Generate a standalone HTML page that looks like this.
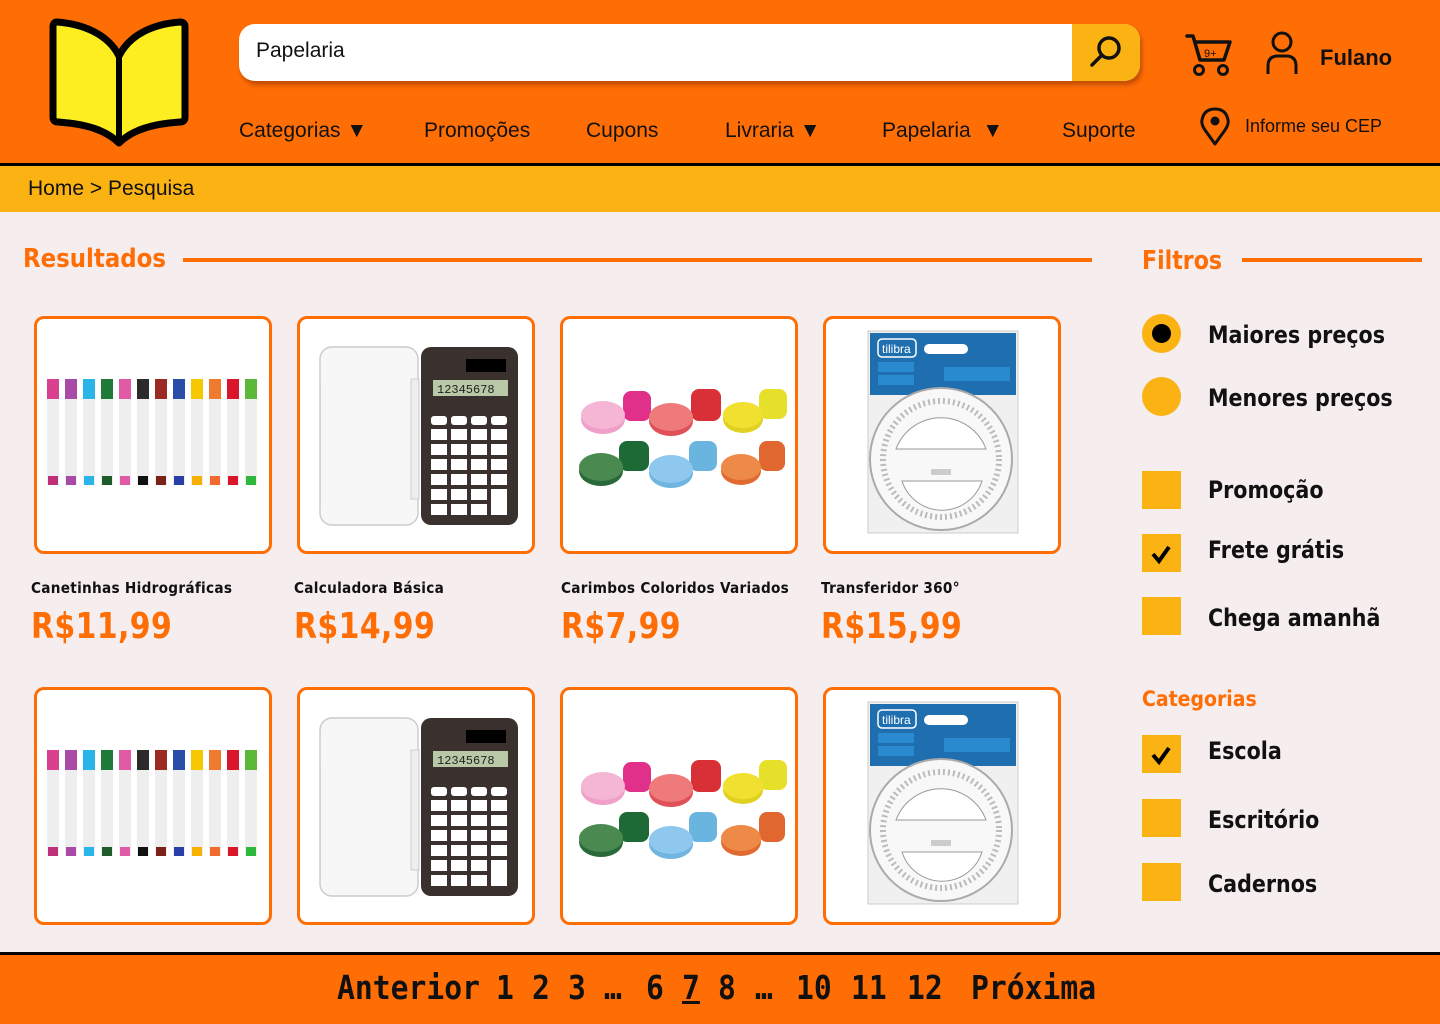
<!DOCTYPE html>
<html><head><meta charset="utf-8">
<style>
*{margin:0;padding:0;box-sizing:border-box}
body{width:1440px;height:1024px;position:relative;background:#F5EDEE;font-family:"DejaVu Sans",sans-serif;overflow:hidden}
.a{position:absolute}
.hdr{left:0;top:0;width:1440px;height:163px;background:#FF6D05}
.bl{left:0;width:1440px;height:3px;background:#000}
.crumb{left:0;top:166px;width:1440px;height:46px;background:#FBB313}
.geo{font-family:"Liberation Sans",sans-serif;color:#111}
.nav{top:117px;font-size:21px;line-height:28px}
.card{width:238px;height:238px;border:3px solid #FF6D05;border-radius:10px;background:#fff;overflow:hidden}
.card svg{position:absolute;left:0;top:0}
.sx{transform-origin:left center;white-space:nowrap}
.name{font-size:15px;font-weight:bold;color:#111;top:579px;letter-spacing:.3px;transform:scaleX(.91)}
.price{font-size:36px;font-weight:bold;color:#FF6D05;top:606px;letter-spacing:.5px;transform:scaleX(.83)}
.ttl{font-size:26px;font-weight:bold;color:#FF6D05}
.circ{width:39px;height:39px;border-radius:50%;background:#FBB313;left:1142px}
.box{width:39px;height:38px;background:#FBB313;left:1142px}
.lbl{left:1208px;font-size:24px;font-weight:bold;color:#111;line-height:30px;transform:scaleX(.86)}
.pg{top:968px;font-family:"DejaVu Sans Mono",monospace;font-weight:bold;font-size:33px;color:#111;line-height:40px;transform:scaleX(.9);transform-origin:left}
</style></head><body>
<div class="a hdr"></div>
<div class="a bl" style="top:163px"></div>
<div class="a crumb"></div>
<div class="a geo" style="left:28px;top:175px;font-size:21px;line-height:28px">Home &gt; Pesquisa</div>

<svg class="a" style="left:48px;top:18px" width="142" height="130" viewBox="0 0 142 130">
<path d="M71 38 C60 16 35 6 9 4 Q5 4 5 9 L5 99 Q5 104 10 104 C38 106 58 112 71 125 C84 112 104 106 132 104 Q137 104 137 99 L137 9 Q137 4 132 4 C106 6 82 16 71 38 Z" fill="#FCEE21" stroke="#000" stroke-width="7" stroke-linejoin="round"/>
<path d="M71 38 L71 123" stroke="#000" stroke-width="6"/>
</svg>

<div class="a" style="left:239px;top:24px;width:901px;height:57px;background:#fff;border-radius:16px;box-shadow:2px 4px 4px rgba(120,40,0,.45);overflow:hidden">
<div class="a" style="right:0;top:0;width:68px;height:57px;background:#FBB313"></div>
<svg class="a" style="right:16px;top:10px" width="36" height="36" viewBox="0 0 36 36"><circle cx="21" cy="14" r="10" fill="none" stroke="#111" stroke-width="3.5"/><path d="M14 21 L4 31" stroke="#111" stroke-width="3.5" stroke-linecap="round"/></svg>
</div>
<div class="a geo" style="left:256px;top:37px;font-size:21px;line-height:28px">Papelaria</div>

<svg class="a" style="left:1184px;top:30px" width="54" height="48" viewBox="0 0 54 48">
<path d="M3 6 L9 6 L16 30 L40 30 L46 12 L11 12" fill="none" stroke="#111" stroke-width="3.5" stroke-linejoin="round" stroke-linecap="round"/>
<circle cx="15" cy="40" r="4.5" fill="none" stroke="#111" stroke-width="3"/><circle cx="39" cy="40" r="4.5" fill="none" stroke="#111" stroke-width="3"/>
<text x="20" y="27" font-family="Liberation Sans" font-size="11" fill="#111">9+</text>
</svg>
<svg class="a" style="left:1264px;top:30px" width="38" height="46" viewBox="0 0 38 46">
<circle cx="18" cy="12" r="9" fill="none" stroke="#111" stroke-width="3"/>
<path d="M4 44 L4 36 Q4 26 14 26 L22 26 Q32 26 32 36 L32 44" fill="none" stroke="#111" stroke-width="3"/>
</svg>
<div class="a" style="left:1320px;top:45px;font-family:'Liberation Sans',sans-serif;font-weight:bold;font-size:22px;color:#111">Fulano</div>

<div class="a geo nav" style="left:239px">Categorias ▼</div>
<div class="a geo nav" style="left:424px">Promoções</div>
<div class="a geo nav" style="left:586px">Cupons</div>
<div class="a geo nav" style="left:725px">Livraria ▼</div>
<div class="a geo nav" style="left:882px">Papelaria &nbsp;▼</div>
<div class="a geo nav" style="left:1062px">Suporte</div>
<svg class="a" style="left:1199px;top:106px" width="32" height="42" viewBox="0 0 32 42">
<path d="M16 38 L6 24 Q2 18 3 14 Q5 3 16 3 Q27 3 29 14 Q30 18 26 24 Z" fill="none" stroke="#111" stroke-width="3" stroke-linejoin="round"/>
<circle cx="16" cy="15" r="4.5" fill="#111"/></svg>
<div class="a geo" style="left:1245px;top:114px;font-size:18px;line-height:24px">Informe seu CEP</div>

<div class="a ttl sx" style="left:23px;top:244px;transform:scaleX(.88)">Resultados</div>
<div class="a" style="left:183px;top:258px;width:909px;height:4px;background:#FF6D05"></div>
<div class="a ttl sx" style="left:1142px;top:246px;transform:scaleX(.85)">Filtros</div>
<div class="a" style="left:1242px;top:258px;width:180px;height:4px;background:#FF6D05"></div>

<div class="a circ" style="top:314px"><div class="a" style="left:10px;top:10px;width:19px;height:19px;border-radius:50%;background:#000"></div></div>
<div class="a lbl sx" style="top:320px">Maiores preços</div>
<div class="a circ" style="top:377px"></div>
<div class="a lbl sx" style="top:383px">Menores preços</div>
<div class="a box" style="top:471px"></div>
<div class="a lbl sx" style="top:475px">Promoção</div>
<div class="a box" style="top:534px"><svg width="39" height="38"><path d="M11 20 L17 27 L27 13" fill="none" stroke="#000" stroke-width="4"/></svg></div>
<div class="a lbl sx" style="top:535px">Frete grátis</div>
<div class="a box" style="top:597px"></div>
<div class="a lbl sx" style="top:603px">Chega amanhã</div>
<div class="a sx" style="left:1142px;top:687px;font-size:21px;font-weight:bold;color:#FF6D05;transform:scaleX(.9)">Categorias</div>
<div class="a box" style="top:735px"><svg width="39" height="38"><path d="M11 20 L17 27 L27 13" fill="none" stroke="#000" stroke-width="4"/></svg></div>
<div class="a lbl sx" style="top:736px">Escola</div>
<div class="a box" style="top:799px"></div>
<div class="a lbl sx" style="top:805px">Escritório</div>
<div class="a box" style="top:863px"></div>
<div class="a lbl sx" style="top:869px">Cadernos</div>

<div class="a card" style="left:34px;top:316px"><svg width="232" height="232">
<g>
<rect x="10" y="60" width="12" height="106" fill="#eee"/><rect x="10" y="60" width="12" height="20" fill="#d9408f"/><rect x="11" y="157" width="10" height="9" fill="#c02f7a"/>
<rect x="28" y="60" width="12" height="106" fill="#eee"/><rect x="28" y="60" width="12" height="20" fill="#a94aa8"/><rect x="29" y="157" width="10" height="9" fill="#a94aa8"/>
<rect x="46" y="60" width="12" height="106" fill="#eee"/><rect x="46" y="60" width="12" height="20" fill="#29b5e8"/><rect x="47" y="157" width="10" height="9" fill="#29b5e8"/>
<rect x="64" y="60" width="12" height="106" fill="#eee"/><rect x="64" y="60" width="12" height="20" fill="#1f7a3a"/><rect x="65" y="157" width="10" height="9" fill="#1f5a2a"/>
<rect x="82" y="60" width="12" height="106" fill="#eee"/><rect x="82" y="60" width="12" height="20" fill="#e05aa5"/><rect x="83" y="157" width="10" height="9" fill="#e05aa5"/>
<rect x="100" y="60" width="12" height="106" fill="#eee"/><rect x="100" y="60" width="12" height="20" fill="#2b2b2b"/><rect x="101" y="157" width="10" height="9" fill="#111"/>
<rect x="118" y="60" width="12" height="106" fill="#eee"/><rect x="118" y="60" width="12" height="20" fill="#9b2a22"/><rect x="119" y="157" width="10" height="9" fill="#7a2218"/>
<rect x="136" y="60" width="12" height="106" fill="#eee"/><rect x="136" y="60" width="12" height="20" fill="#2a4ea8"/><rect x="137" y="157" width="10" height="9" fill="#2a3ea8"/>
<rect x="154" y="60" width="12" height="106" fill="#eee"/><rect x="154" y="60" width="12" height="20" fill="#f5c800"/><rect x="155" y="157" width="10" height="9" fill="#f5b000"/>
<rect x="172" y="60" width="12" height="106" fill="#eee"/><rect x="172" y="60" width="12" height="20" fill="#f07a30"/><rect x="173" y="157" width="10" height="9" fill="#f06a30"/>
<rect x="190" y="60" width="12" height="106" fill="#eee"/><rect x="190" y="60" width="12" height="20" fill="#d8182a"/><rect x="191" y="157" width="10" height="9" fill="#d8182a"/>
<rect x="208" y="60" width="12" height="106" fill="#eee"/><rect x="208" y="60" width="12" height="20" fill="#5cb83a"/><rect x="209" y="157" width="10" height="9" fill="#2cb83a"/>
</g></svg></div>

<div class="a card" style="left:297px;top:316px"><svg width="232" height="232">
<rect x="20" y="28" width="98" height="178" rx="12" fill="#f7f7f7" stroke="#ccc" stroke-width="1.5"/>
<rect x="111" y="60" width="8" height="120" fill="#eee" stroke="#ccc"/>
<rect x="121" y="28" width="97" height="178" rx="10" fill="#3a302e"/>
<rect x="166" y="40" width="40" height="13" fill="#000"/>
<rect x="133" y="61" width="75" height="16" fill="#b9c9a8"/>
<text x="137" y="74" font-family="Liberation Mono" font-size="12" fill="#222">12345678</text>
<g fill="#fff">
<rect x="131" y="97" width="16" height="9" rx="3"/><rect x="151" y="97" width="16" height="9" rx="3"/><rect x="171" y="97" width="16" height="9" rx="3"/><rect x="191" y="97" width="16" height="9" rx="3"/>
<rect x="131" y="110" width="16" height="11"/><rect x="151" y="110" width="16" height="11"/><rect x="171" y="110" width="16" height="11"/><rect x="191" y="110" width="16" height="11"/>
<rect x="131" y="125" width="16" height="11"/><rect x="151" y="125" width="16" height="11"/><rect x="171" y="125" width="16" height="11"/><rect x="191" y="125" width="16" height="11"/>
<rect x="131" y="140" width="16" height="11"/><rect x="151" y="140" width="16" height="11"/><rect x="171" y="140" width="16" height="11"/><rect x="191" y="140" width="16" height="11"/>
<rect x="131" y="155" width="16" height="11"/><rect x="151" y="155" width="16" height="11"/><rect x="171" y="155" width="16" height="11"/><rect x="191" y="155" width="16" height="11"/>
<rect x="131" y="170" width="16" height="11"/><rect x="151" y="170" width="16" height="11"/><rect x="171" y="170" width="16" height="11"/><rect x="191" y="170" width="16" height="26"/>
<rect x="131" y="185" width="16" height="11"/><rect x="151" y="185" width="16" height="11"/><rect x="171" y="185" width="16" height="11"/>
</g></svg></div>

<div class="a card" style="left:560px;top:316px"><svg width="232" height="232">
<g><rect x="60" y="72" width="28" height="30" rx="8" fill="#e0308a"/><ellipse cx="40" cy="100" rx="22" ry="15" fill="#f0a0c8"/><ellipse cx="40" cy="96" rx="22" ry="14" fill="#f4b6d4"/></g>
<g><rect x="128" y="70" width="30" height="32" rx="8" fill="#d83036"/><ellipse cx="108" cy="102" rx="22" ry="15" fill="#e05058"/><ellipse cx="108" cy="98" rx="22" ry="14" fill="#ee7a7a"/></g>
<g><rect x="196" y="70" width="28" height="30" rx="8" fill="#e6e02a"/><ellipse cx="180" cy="100" rx="20" ry="14" fill="#e0d020"/><ellipse cx="180" cy="96" rx="20" ry="13" fill="#f2e030"/></g>
<g><rect x="56" y="122" width="30" height="30" rx="8" fill="#1e6a36"/><ellipse cx="38" cy="152" rx="22" ry="15" fill="#2a6a3a"/><ellipse cx="38" cy="148" rx="22" ry="14" fill="#4a8a50"/></g>
<g><rect x="126" y="122" width="28" height="30" rx="8" fill="#6ab4e0"/><ellipse cx="108" cy="154" rx="22" ry="15" fill="#70b4e0"/><ellipse cx="108" cy="150" rx="22" ry="14" fill="#8ec8ee"/></g>
<g><rect x="196" y="122" width="26" height="30" rx="8" fill="#e06830"/><ellipse cx="178" cy="152" rx="20" ry="14" fill="#e06a30"/><ellipse cx="178" cy="148" rx="20" ry="13" fill="#ee8a48"/></g>
</svg></div>

<div class="a card" style="left:823px;top:316px"><svg width="232" height="232">
<rect x="42" y="12" width="150" height="202" fill="#f0f0f0" stroke="#ccc"/>
<rect x="44" y="14" width="146" height="62" fill="#1f6fb0"/>
<rect x="52" y="20" width="38" height="18" rx="4" fill="none" stroke="#fff" stroke-width="1.5"/>
<text x="56" y="34" font-family="Liberation Sans" font-size="12" fill="#fff">tilibra</text>
<rect x="98" y="25" width="44" height="10" rx="5" fill="#fff"/>
<rect x="52" y="43" width="36" height="10" fill="#2a8ad0"/><rect x="52" y="56" width="36" height="10" fill="#2a8ad0"/>
<rect x="118" y="48" width="66" height="14" fill="#2a8ad0"/>
<circle cx="115" cy="140" r="71" fill="#f8f8f8" stroke="#aaa" stroke-width="2"/>
<circle cx="115" cy="140" r="58" fill="none" stroke="#bbb" stroke-width="6" stroke-dasharray="2 3"/>
<path d="M70 130 A48 48 0 0 1 160 130 Z" fill="#fff" stroke="#999"/>
<path d="M76 162 L156 162 A42 42 0 0 1 76 162 Z" fill="#fff" stroke="#999"/>
<rect x="105" y="150" width="20" height="6" fill="#ccc"/>
</svg></div>

<div class="a name sx" style="left:31px">Canetinhas Hidrográficas</div>
<div class="a name sx" style="left:294px">Calculadora Básica</div>
<div class="a name sx" style="left:561px">Carimbos Coloridos Variados</div>
<div class="a name sx" style="left:821px">Transferidor 360°</div>
<div class="a price sx" style="left:31px">R$11,99</div>
<div class="a price sx" style="left:294px">R$14,99</div>
<div class="a price sx" style="left:561px">R$7,99</div>
<div class="a price sx" style="left:821px">R$15,99</div>

<div class="a card" style="left:34px;top:687px"><svg width="232" height="232">
<g>
<rect x="10" y="60" width="12" height="106" fill="#eee"/><rect x="10" y="60" width="12" height="20" fill="#d9408f"/><rect x="11" y="157" width="10" height="9" fill="#c02f7a"/>
<rect x="28" y="60" width="12" height="106" fill="#eee"/><rect x="28" y="60" width="12" height="20" fill="#a94aa8"/><rect x="29" y="157" width="10" height="9" fill="#a94aa8"/>
<rect x="46" y="60" width="12" height="106" fill="#eee"/><rect x="46" y="60" width="12" height="20" fill="#29b5e8"/><rect x="47" y="157" width="10" height="9" fill="#29b5e8"/>
<rect x="64" y="60" width="12" height="106" fill="#eee"/><rect x="64" y="60" width="12" height="20" fill="#1f7a3a"/><rect x="65" y="157" width="10" height="9" fill="#1f5a2a"/>
<rect x="82" y="60" width="12" height="106" fill="#eee"/><rect x="82" y="60" width="12" height="20" fill="#e05aa5"/><rect x="83" y="157" width="10" height="9" fill="#e05aa5"/>
<rect x="100" y="60" width="12" height="106" fill="#eee"/><rect x="100" y="60" width="12" height="20" fill="#2b2b2b"/><rect x="101" y="157" width="10" height="9" fill="#111"/>
<rect x="118" y="60" width="12" height="106" fill="#eee"/><rect x="118" y="60" width="12" height="20" fill="#9b2a22"/><rect x="119" y="157" width="10" height="9" fill="#7a2218"/>
<rect x="136" y="60" width="12" height="106" fill="#eee"/><rect x="136" y="60" width="12" height="20" fill="#2a4ea8"/><rect x="137" y="157" width="10" height="9" fill="#2a3ea8"/>
<rect x="154" y="60" width="12" height="106" fill="#eee"/><rect x="154" y="60" width="12" height="20" fill="#f5c800"/><rect x="155" y="157" width="10" height="9" fill="#f5b000"/>
<rect x="172" y="60" width="12" height="106" fill="#eee"/><rect x="172" y="60" width="12" height="20" fill="#f07a30"/><rect x="173" y="157" width="10" height="9" fill="#f06a30"/>
<rect x="190" y="60" width="12" height="106" fill="#eee"/><rect x="190" y="60" width="12" height="20" fill="#d8182a"/><rect x="191" y="157" width="10" height="9" fill="#d8182a"/>
<rect x="208" y="60" width="12" height="106" fill="#eee"/><rect x="208" y="60" width="12" height="20" fill="#5cb83a"/><rect x="209" y="157" width="10" height="9" fill="#2cb83a"/>
</g></svg></div>

<div class="a card" style="left:297px;top:687px"><svg width="232" height="232">
<rect x="20" y="28" width="98" height="178" rx="12" fill="#f7f7f7" stroke="#ccc" stroke-width="1.5"/>
<rect x="111" y="60" width="8" height="120" fill="#eee" stroke="#ccc"/>
<rect x="121" y="28" width="97" height="178" rx="10" fill="#3a302e"/>
<rect x="166" y="40" width="40" height="13" fill="#000"/>
<rect x="133" y="61" width="75" height="16" fill="#b9c9a8"/>
<text x="137" y="74" font-family="Liberation Mono" font-size="12" fill="#222">12345678</text>
<g fill="#fff">
<rect x="131" y="97" width="16" height="9" rx="3"/><rect x="151" y="97" width="16" height="9" rx="3"/><rect x="171" y="97" width="16" height="9" rx="3"/><rect x="191" y="97" width="16" height="9" rx="3"/>
<rect x="131" y="110" width="16" height="11"/><rect x="151" y="110" width="16" height="11"/><rect x="171" y="110" width="16" height="11"/><rect x="191" y="110" width="16" height="11"/>
<rect x="131" y="125" width="16" height="11"/><rect x="151" y="125" width="16" height="11"/><rect x="171" y="125" width="16" height="11"/><rect x="191" y="125" width="16" height="11"/>
<rect x="131" y="140" width="16" height="11"/><rect x="151" y="140" width="16" height="11"/><rect x="171" y="140" width="16" height="11"/><rect x="191" y="140" width="16" height="11"/>
<rect x="131" y="155" width="16" height="11"/><rect x="151" y="155" width="16" height="11"/><rect x="171" y="155" width="16" height="11"/><rect x="191" y="155" width="16" height="11"/>
<rect x="131" y="170" width="16" height="11"/><rect x="151" y="170" width="16" height="11"/><rect x="171" y="170" width="16" height="11"/><rect x="191" y="170" width="16" height="26"/>
<rect x="131" y="185" width="16" height="11"/><rect x="151" y="185" width="16" height="11"/><rect x="171" y="185" width="16" height="11"/>
</g></svg></div>

<div class="a card" style="left:560px;top:687px"><svg width="232" height="232">
<g><rect x="60" y="72" width="28" height="30" rx="8" fill="#e0308a"/><ellipse cx="40" cy="100" rx="22" ry="15" fill="#f0a0c8"/><ellipse cx="40" cy="96" rx="22" ry="14" fill="#f4b6d4"/></g>
<g><rect x="128" y="70" width="30" height="32" rx="8" fill="#d83036"/><ellipse cx="108" cy="102" rx="22" ry="15" fill="#e05058"/><ellipse cx="108" cy="98" rx="22" ry="14" fill="#ee7a7a"/></g>
<g><rect x="196" y="70" width="28" height="30" rx="8" fill="#e6e02a"/><ellipse cx="180" cy="100" rx="20" ry="14" fill="#e0d020"/><ellipse cx="180" cy="96" rx="20" ry="13" fill="#f2e030"/></g>
<g><rect x="56" y="122" width="30" height="30" rx="8" fill="#1e6a36"/><ellipse cx="38" cy="152" rx="22" ry="15" fill="#2a6a3a"/><ellipse cx="38" cy="148" rx="22" ry="14" fill="#4a8a50"/></g>
<g><rect x="126" y="122" width="28" height="30" rx="8" fill="#6ab4e0"/><ellipse cx="108" cy="154" rx="22" ry="15" fill="#70b4e0"/><ellipse cx="108" cy="150" rx="22" ry="14" fill="#8ec8ee"/></g>
<g><rect x="196" y="122" width="26" height="30" rx="8" fill="#e06830"/><ellipse cx="178" cy="152" rx="20" ry="14" fill="#e06a30"/><ellipse cx="178" cy="148" rx="20" ry="13" fill="#ee8a48"/></g>
</svg></div>

<div class="a card" style="left:823px;top:687px"><svg width="232" height="232">
<rect x="42" y="12" width="150" height="202" fill="#f0f0f0" stroke="#ccc"/>
<rect x="44" y="14" width="146" height="62" fill="#1f6fb0"/>
<rect x="52" y="20" width="38" height="18" rx="4" fill="none" stroke="#fff" stroke-width="1.5"/>
<text x="56" y="34" font-family="Liberation Sans" font-size="12" fill="#fff">tilibra</text>
<rect x="98" y="25" width="44" height="10" rx="5" fill="#fff"/>
<rect x="52" y="43" width="36" height="10" fill="#2a8ad0"/><rect x="52" y="56" width="36" height="10" fill="#2a8ad0"/>
<rect x="118" y="48" width="66" height="14" fill="#2a8ad0"/>
<circle cx="115" cy="140" r="71" fill="#f8f8f8" stroke="#aaa" stroke-width="2"/>
<circle cx="115" cy="140" r="58" fill="none" stroke="#bbb" stroke-width="6" stroke-dasharray="2 3"/>
<path d="M70 130 A48 48 0 0 1 160 130 Z" fill="#fff" stroke="#999"/>
<path d="M76 162 L156 162 A42 42 0 0 1 76 162 Z" fill="#fff" stroke="#999"/>
<rect x="105" y="150" width="20" height="6" fill="#ccc"/>
</svg></div>

<div class="a bl" style="top:952px"></div>
<div class="a" style="left:0;top:955px;width:1440px;height:69px;background:#FF6D05"></div>
<div class="a pg" style="left:337px">Anterior</div>
<div class="a pg" style="left:496px">1</div>
<div class="a pg" style="left:532px">2</div>
<div class="a pg" style="left:568px">3</div>
<div class="a pg" style="left:604px">…</div>
<div class="a pg" style="left:646px">6</div>
<div class="a pg" style="left:682px;text-decoration:underline">7</div>
<div class="a pg" style="left:718px">8</div>
<div class="a pg" style="left:755px">…</div>
<div class="a pg" style="left:796px">10</div>
<div class="a pg" style="left:851px">11</div>
<div class="a pg" style="left:907px">12</div>
<div class="a pg" style="left:971px">Próxima</div>
</body></html>
